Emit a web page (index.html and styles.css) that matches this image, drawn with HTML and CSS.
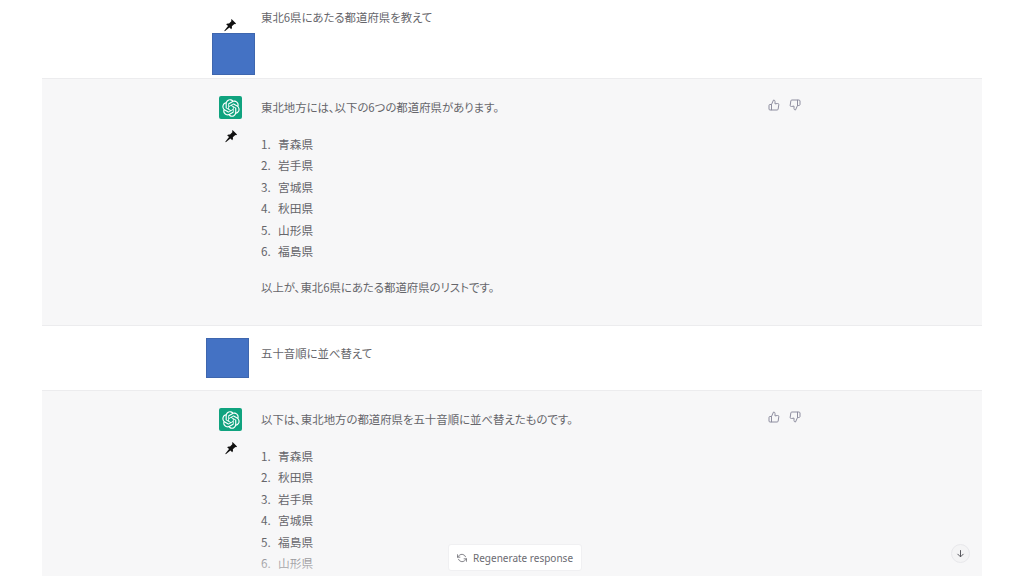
FILE: index.html
```html
<!DOCTYPE html>
<html lang="ja">
<head>
<meta charset="utf-8">
<title>Chat</title>
<link rel="stylesheet" href="styles.css">
</head>
<body>
<svg class="defs" width="0" height="0" aria-hidden="true">
  <symbol id="pin" viewBox="0 0 24 24"><path d="M14.6 1.6l7.8 7.8-1.7 1.4-1.2-.7-4.4 4.2c.7 2.1.2 3.800-1 5l-3.100-3.100-7.900 6.400-.9-.9 6.400-7.900-3.200-3.200c1.300-1.300 3-1.700 5-1l4.200-4.400-.7-1.200z"/></symbol>
  <symbol id="up" viewBox="0 0 24 24"><path d="M14 9V5a3 3 0 0 0-3-3l-4 9v11h11.280a2 2 0 0 0 2-1.700l1.380-9a2 2 0 0 0-2-2.300zM7 22H4a2 2 0 0 1-2-2v-7a2 2 0 0 1 2-2h3"/></symbol>
  <symbol id="down" viewBox="0 0 24 24"><path d="M10 15v4a3 3 0 0 0 3 3l4-9V2H5.720a2 2 0 0 0-2 1.700l-1.380 9a2 2 0 0 0 2 2.300zm7-13h2.670A2.310 2.310 0 0 1 22 4v7a2.310 2.310 0 0 1-2.330 2H17"/></symbol>
  <symbol id="logo" viewBox="0 0 41 41"><path d="M37.5324 16.8707C37.9808 15.5241 38.1363 14.0974 37.9886 12.6859C37.8409 11.2744 37.3934 9.91076 36.676 8.68622C35.6126 6.83404 33.9882 5.3676 32.0373 4.4985C30.0864 3.62941 27.9098 3.40259 25.8215 3.85078C24.8796 2.7893 23.7219 1.94125 22.4257 1.36341C21.1295 0.785575 19.7249 0.491269 18.3058 0.500197C16.1708 0.495044 14.0893 1.16803 12.3614 2.42214C10.6335 3.67624 9.34853 5.44666 8.6917 7.47815C7.30085 7.76286 5.98686 8.3414 4.8377 9.17505C3.68854 10.0087 2.73073 11.0782 2.02839 12.312C0.956464 14.1591 0.498905 16.2988 0.721698 18.4228C0.944492 20.5467 1.83612 22.5449 3.268 24.1293C2.81966 25.4759 2.66413 26.9026 2.81182 28.3141C2.95951 29.7256 3.40701 31.0892 4.12437 32.3138C5.18791 34.1659 6.8123 35.6322 8.76321 36.5013C10.7141 37.3704 12.8907 37.5973 14.9789 37.1492C15.9208 38.2107 17.0786 39.0587 18.3747 39.6366C19.6709 40.2144 21.0755 40.5087 22.4946 40.4998C24.6307 40.5054 26.7133 39.8321 28.4418 38.5772C30.1704 37.3223 31.4556 35.5506 32.1119 33.5179C33.5027 33.2332 34.8167 32.6547 35.9659 31.821C37.115 30.9874 38.0728 29.9178 38.7752 28.684C39.8458 26.8371 40.3023 24.6979 40.0789 22.5748C39.8556 20.4517 38.9639 18.4544 37.5324 16.8707ZM22.4978 37.8849C20.7443 37.8874 19.0459 37.2733 17.6994 36.1501C17.7601 36.117 17.8666 36.0586 17.936 36.0161L25.9004 31.4156C26.1003 31.3019 26.2663 31.137 26.3813 30.9378C26.4964 30.7386 26.5563 30.5124 26.5549 30.2825V19.0542L29.9213 20.998C29.9389 21.0068 29.9541 21.0198 29.9656 21.0359C29.977 21.052 29.9842 21.0707 29.9867 21.0902V30.3889C29.9842 32.375 29.1946 34.2791 27.7909 35.6841C26.3872 37.0892 24.4838 37.8806 22.4978 37.8849ZM6.39227 31.0064C5.51397 29.4888 5.19742 27.7107 5.49804 25.9832C5.55718 26.0187 5.66048 26.0818 5.73461 26.1244L13.699 30.7248C13.8975 30.8408 14.1233 30.902 14.3532 30.902C14.583 30.902 14.8088 30.8408 15.0073 30.7248L24.731 25.1103V28.9979C24.7321 29.0177 24.7283 29.0376 24.7199 29.0556C24.7115 29.0736 24.6988 29.0893 24.6829 29.1012L16.6317 33.7497C14.9096 34.7416 12.8643 35.0097 10.9447 34.4954C9.02506 33.9811 7.38785 32.7263 6.39227 31.0064ZM4.29707 13.6194C5.17156 12.0998 6.55279 10.9364 8.19885 10.3327C8.19885 10.4013 8.19491 10.5228 8.19491 10.6071V19.808C8.19351 20.0378 8.25334 20.2638 8.36823 20.4629C8.48312 20.6619 8.64893 20.8267 8.84863 20.9404L18.5723 26.5542L15.206 28.4979C15.1894 28.5089 15.1703 28.5155 15.1505 28.5173C15.1307 28.5191 15.1107 28.516 15.0924 28.5082L7.04046 23.8557C5.32135 22.8601 4.06716 21.2235 3.55289 19.3046C3.03862 17.3858 3.30624 15.3413 4.29707 13.6194ZM31.955 20.0556L22.2312 14.4411L25.5976 12.4981C25.6142 12.4872 25.6333 12.4805 25.6531 12.4787C25.6729 12.4769 25.6928 12.4801 25.7111 12.4879L33.7631 17.1364C34.9967 17.849 36.0017 18.8982 36.6606 20.1613C37.3194 21.4244 37.6047 22.849 37.4832 24.2684C37.3617 25.6878 36.8382 27.0432 35.9743 28.1759C35.1103 29.3086 33.9415 30.1717 32.6047 30.6641C32.6047 30.5947 32.6047 30.4733 32.6047 30.3889V21.188C32.6066 20.9586 32.5474 20.7328 32.4332 20.5338C32.319 20.3348 32.154 20.1698 31.955 20.0556ZM35.3055 15.0128C35.2464 14.9765 35.1431 14.9142 35.069 14.8717L27.1045 10.2712C26.906 10.1554 26.6803 10.0943 26.4504 10.0943C26.2206 10.0943 25.9948 10.1554 25.7963 10.2712L16.0726 15.8858V11.9982C16.0715 11.9783 16.0753 11.9585 16.0837 11.9405C16.0921 11.9225 16.1048 11.9068 16.1207 11.8949L24.1719 7.25025C25.4053 6.53903 26.8158 6.19376 28.2383 6.25482C29.6608 6.31589 31.0364 6.78077 32.2044 7.59508C33.3723 8.40939 34.2842 9.53945 34.8334 10.8531C35.3826 12.1667 35.5464 13.6095 35.3055 15.0128ZM14.2424 21.9419L10.8752 19.9981C10.8576 19.9893 10.8423 19.9763 10.8309 19.9602C10.8195 19.9441 10.8122 19.9254 10.8098 19.9058V10.6071C10.8107 9.18295 11.2173 7.78848 11.9819 6.58696C12.7466 5.38544 13.8377 4.42659 15.1275 3.82264C16.4173 3.21869 17.8524 2.99464 19.2649 3.1767C20.6775 3.35876 22.0089 3.93941 23.1034 4.85067C23.0427 4.88379 22.937 4.94215 22.8668 4.98473L14.9024 9.58517C14.7025 9.69878 14.5366 9.86356 14.4215 10.0626C14.3065 10.2616 14.2466 10.4877 14.2479 10.7175L14.2424 21.9419ZM16.071 17.9991L20.4018 15.4978L24.7325 17.9975V22.9985L20.4018 25.4983L16.071 22.9985V17.9991Z"/></symbol>
</svg>
<main class="thread">
  <section class="turn user first">
    <div class="avatar">
      <svg class="pin pin-user"><use href="#pin"/></svg>
      <div class="mask mask-a"></div>
    </div>
    <div class="message"><p>東北6県にあたる都道府県を教えて</p></div>
  </section>
  <section class="turn bot">
    <div class="avatar logo">
      <svg class="logo-mark"><use href="#logo"/></svg>
      <svg class="pin pin-bot"><use href="#pin"/></svg>
    </div>
    <div class="message">
      <p>東北地方には、以下の6つの都道府県があります。</p>
      <ol>
        <li>青森県</li><li>岩手県</li><li>宮城県</li><li>秋田県</li><li>山形県</li><li>福島県</li>
      </ol>
      <p>以上が、東北6県にあたる都道府県のリストです。</p>
    </div>
    <div class="actions">
      <svg class="act"><use href="#up"/></svg>
      <svg class="act"><use href="#down"/></svg>
    </div>
  </section>
  <section class="turn user second">
    <div class="avatar">
      <div class="mask mask-b"></div>
    </div>
    <div class="message"><p>五十音順に並べ替えて</p></div>
  </section>
  <section class="turn bot last">
    <div class="avatar logo">
      <svg class="logo-mark"><use href="#logo"/></svg>
      <svg class="pin pin-bot"><use href="#pin"/></svg>
    </div>
    <div class="message">
      <p>以下は、東北地方の都道府県を五十音順に並べ替えたものです。</p>
      <ol>
        <li>青森県</li><li>秋田県</li><li>岩手県</li><li>宮城県</li><li>福島県</li><li>山形県</li>
      </ol>
    </div>
    <div class="actions">
      <svg class="act"><use href="#up"/></svg>
      <svg class="act"><use href="#down"/></svg>
    </div>
  </section>
  <div class="fade"></div>
  <button class="regen" type="button">
    <svg class="regen-icon" viewBox="0 0 24 24"><polyline points="1 4 1 10 7 10"/><polyline points="23 20 23 14 17 14"/><path d="M20.490 9A9 9 0 0 0 5.640 5.640L1 10m22 4l-4.640 4.360A9 9 0 0 1 3.510 15"/></svg>
    <span>Regenerate response</span>
  </button>
  <button class="scroll" type="button" aria-label="scroll down">
    <svg viewBox="0 0 24 24"><line x1="12" y1="3" x2="12" y2="21"/><polyline points="4 13 12 21 20 13"/></svg>
  </button>
</main>
</body>
</html>
```
FILE: styles.css
```css
html, body {
  margin: 0;
  height: 576px;
  overflow: hidden;
  background: #fff;
}
.defs { position: absolute; }
.thread {
  position: relative;
  height: 576px;
  margin: 0 42px;
  overflow: hidden;
  display: flex;
  flex-direction: column;
  font-family: "Noto Sans CJK JP", "Noto Sans", sans-serif;
  font-size: 11.4px;
  font-feature-settings: "palt";
  line-height: 21.4px;
  color: #66666b;
}
.turn {
  display: flex;
  align-items: flex-start;
  gap: 19px;
  padding-left: 177px;
  padding-right: 181px;
  box-sizing: border-box;
  flex: none;
}
.user { background: #fff; }
.bot { background: #f7f7f8; border-top: 1px solid #ececee; border-bottom: 1px solid #ececee; }
.first { height: 78px; padding-top: 7px; }
.bot { height: 248px; padding-top: 17px; }
.second { height: 64px; padding-top: 17px; }
.last { flex: 1; height: auto; border-bottom: 0; }
.avatar { position: relative; width: 23px; height: 23px; flex: none; }
.logo { background: #10a37f; border-radius: 2px; display: flex; align-items: center; justify-content: center; }
.logo-mark { width: 18px; height: 18px; fill: #fff; }
.message { flex: 1; }
.bot .message { padding-top: 1px; }
.message p { margin: 0; }
.message ol { margin: 14.5px 0 16px; padding: 0; list-style: none; counter-reset: item; font-size: 11.7px; }
.message li { counter-increment: item; display: flex; }
.message li::before { content: counter(item) "."; width: 17px; }
.actions { display: flex; gap: 9px; padding-top: 3px; }
.act { width: 12px; height: 12px; fill: none; stroke: #8e8ea0; stroke-width: 2; stroke-linecap: round; stroke-linejoin: round; }
.pin { position: absolute; width: 14px; height: 14px; fill: #111; }
.pin-user { left: 4px; top: 11px; }
.pin-bot { left: 5px; top: 33px; }
.mask { position: absolute; background: #4472c4; border: 1px solid #3e66ae; box-sizing: border-box; }
.mask-a { left: -7px; top: 26px; width: 43px; height: 42px; }
.mask-b { left: -13px; top: -5px; width: 43px; height: 40px; }
.fade {
  position: absolute;
  left: 0; right: 0; bottom: 0;
  height: 34px;
  background: linear-gradient(to bottom, rgba(247,247,248,0), rgba(247,247,248,.7));
}
.regen {
  position: absolute;
  left: 406px;
  top: 544px;
  width: 134px;
  height: 27px;
  display: flex;
  align-items: center;
  gap: 6px;
  padding: 1px 0 0 8px;
  box-sizing: border-box;
  background: #fff;
  border: 1px solid #f0f0f2;
  border-radius: 3px;
  font: 10px/1 "Noto Sans", sans-serif;
  color: #6b6b72;
}
.regen-icon { width: 10px; height: 10px; fill: none; stroke: #6b6b72; stroke-width: 2; stroke-linecap: round; stroke-linejoin: round; }
.scroll {
  position: absolute;
  left: 909px;
  top: 544px;
  width: 19px;
  height: 19px;
  padding: 4px;
  border: 1px solid #e8e8eb;
  border-radius: 50%;
  background: #f4f4f5;
  box-sizing: border-box;
}
.scroll svg { display: block; width: 100%; height: 100%; fill: none; stroke: #55555c; stroke-width: 2.6; }
```
